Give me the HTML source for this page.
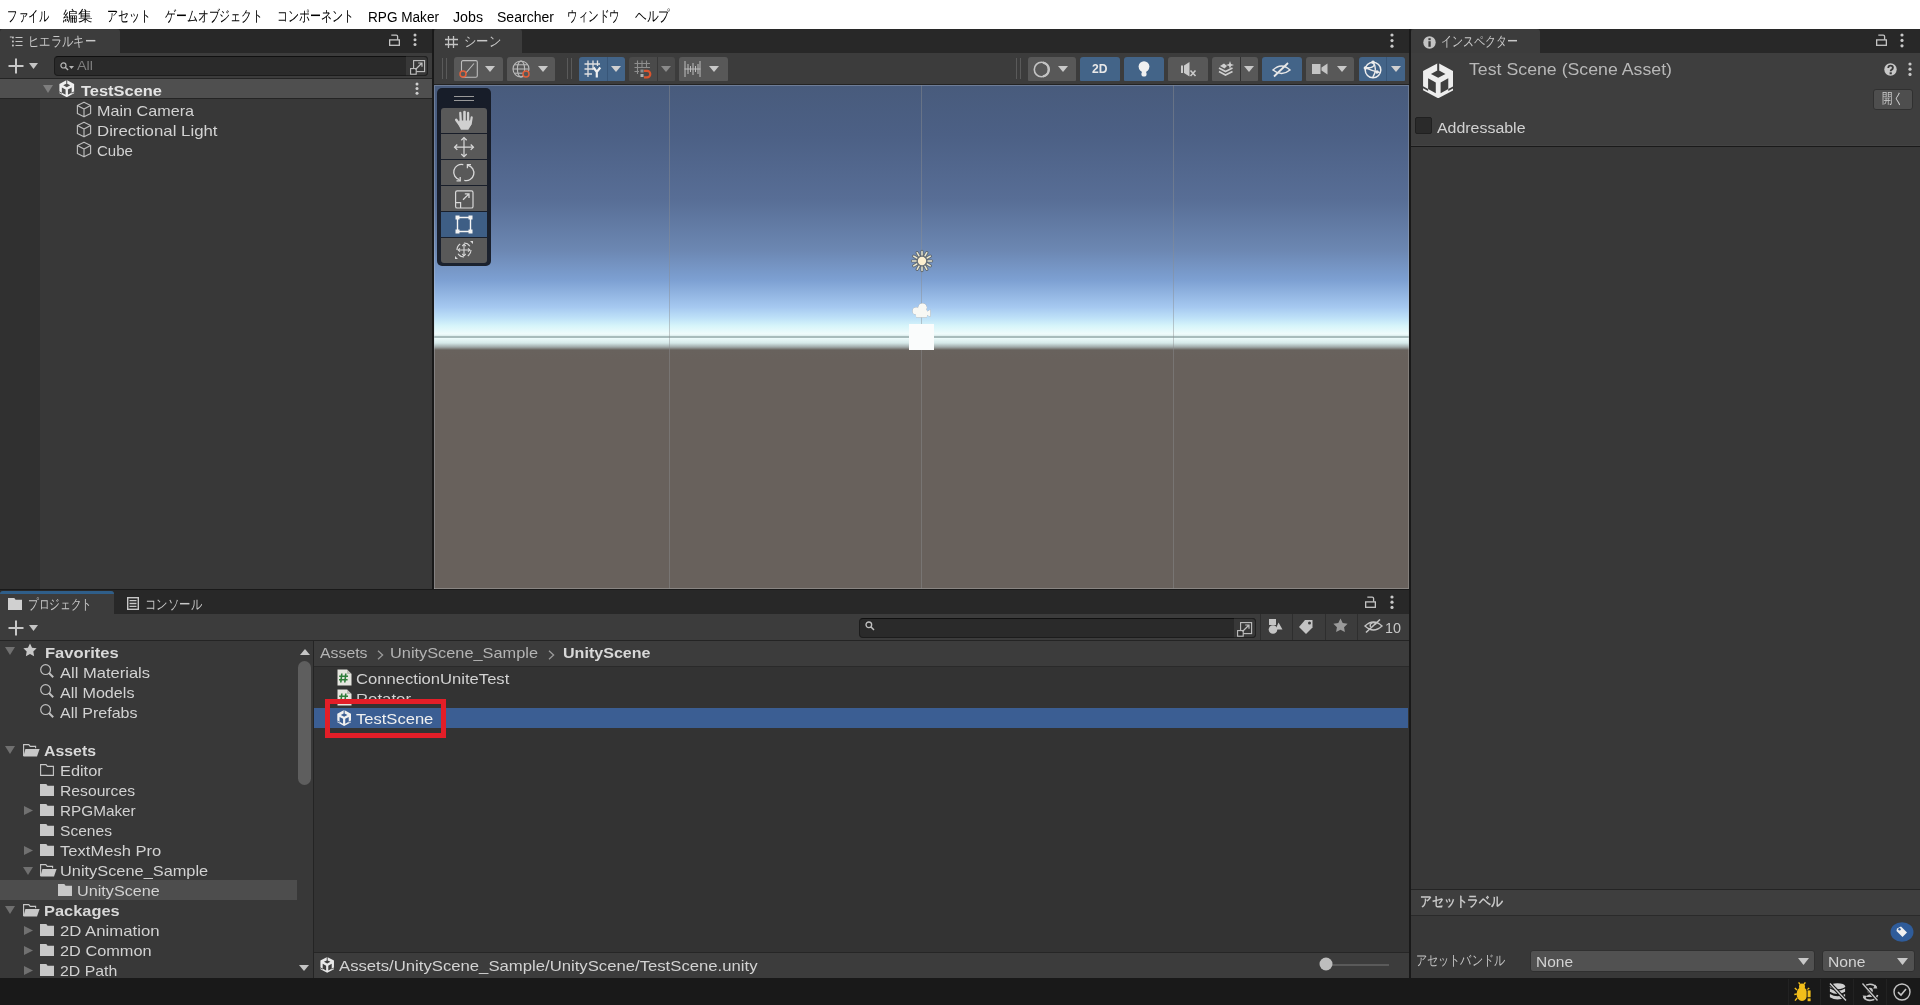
<!DOCTYPE html>
<html><head><meta charset="utf-8"><style>
*{box-sizing:border-box;margin:0;padding:0}
html,body{width:1920px;height:1005px;overflow:hidden;background:#191919;font-family:"Liberation Sans",sans-serif;font-size:15px;color:#D2D2D2;position:relative}
.a{position:absolute}
svg.a{overflow:visible}
.t{position:absolute;white-space:pre;line-height:1;transform-origin:0 0}

</style></head><body>
<div class="a" style="left:0px;top:0px;width:1920px;height:29px;background:#FFFFFF;"></div>
<span id="t0" class="t" style="left:7px;top:8px;font-size:15px;font-weight:400;color:#000000;transform:scaleX(0.7000);">ファイル</span>
<span id="t1" class="t" style="left:63px;top:8px;font-size:15px;font-weight:400;color:#000000;transform:scaleX(0.9667);">編集</span>
<span id="t2" class="t" style="left:107px;top:8px;font-size:15px;font-weight:400;color:#000000;transform:scaleX(0.7333);">アセット</span>
<span id="t3" class="t" style="left:165px;top:8px;font-size:15px;font-weight:400;color:#000000;transform:scaleX(0.7259);">ゲームオブジェクト</span>
<span id="t4" class="t" style="left:277px;top:8px;font-size:15px;font-weight:400;color:#000000;transform:scaleX(0.7333);">コンポーネント</span>
<span id="t5" class="t" style="left:368px;top:10px;font-size:14px;font-weight:400;color:#000000;transform:scaleX(0.9709);">RPG Maker</span>
<span id="t6" class="t" style="left:453px;top:10px;font-size:14px;font-weight:400;color:#000000;transform:scaleX(1.0143);">Jobs</span>
<span id="t7" class="t" style="left:497px;top:10px;font-size:14px;font-weight:400;color:#000000;transform:scaleX(1.0033);">Searcher</span>
<span id="t8" class="t" style="left:567px;top:8px;font-size:15px;font-weight:400;color:#000000;transform:scaleX(0.7067);">ウィンドウ</span>
<span id="t9" class="t" style="left:635px;top:8px;font-size:15px;font-weight:400;color:#000000;transform:scaleX(0.7778);">ヘルプ</span>
<div class="a" style="left:0px;top:29px;width:1920px;height:949px;background:#191919;"></div>
<div class="a" style="left:0px;top:29px;width:432px;height:24px;background:#282828;"></div>
<div class="a" style="left:0px;top:29px;width:120px;height:24px;background:#3C3C3C;border-radius:3px 3px 0 0"></div>
<div class="a" style="left:0px;top:53px;width:432px;height:25px;background:#3C3C3C;"></div>
<div class="a" style="left:0px;top:78px;width:432px;height:1px;background:#242424;"></div>
<div class="a" style="left:0px;top:79px;width:432px;height:510px;background:#383838;"></div>
<div class="a" style="left:0px;top:99px;width:40px;height:490px;background:#303030;"></div>
<div class="a" style="left:0px;top:79px;width:432px;height:20px;background:#4F4F4F;"></div>
<div class="a" style="left:0px;top:98px;width:432px;height:1px;background:#242424;"></div>
<div class="a" style="left:434px;top:29px;width:975px;height:24px;background:#282828;"></div>
<div class="a" style="left:434px;top:29px;width:88px;height:24px;background:#3C3C3C;border-radius:3px 3px 0 0"></div>
<div class="a" style="left:434px;top:53px;width:975px;height:32px;background:#3C3C3C;"></div>
<div class="a" style="left:434px;top:84px;width:975px;height:1px;background:#232323;"></div>
<div class="a" style="left:434px;top:85px;width:975px;height:504px;background:linear-gradient(to bottom,#485B7C 0px,#4C6085 50px,#586E96 115px,#6C87B2 165px,#7DA0D2 195px,#A5C8F0 222px,#BEE1F8 233px,#D7F5FA 241px,#F0FCFC 249px,#E0F0F0 250.5px,#A8BCBC 251px,#A8BCBC 252.60000000000002px,#EBFAFA 253.5px,#D5E9E9 258px,#A0AAAA 262px,#68625D 265px,#68615C 275px,#68615C 504px);"></div>
<div class="a" style="left:434px;top:85px;width:975px;height:1px;background:rgba(200,205,215,0.30);"></div>
<div class="a" style="left:434px;top:86px;width:1px;height:503px;background:rgba(200,205,215,0.30);"></div>
<div class="a" style="left:434px;top:588px;width:975px;height:1px;background:rgba(200,200,200,0.35);"></div>
<div class="a" style="left:1408px;top:86px;width:1px;height:502px;background:rgba(200,200,200,0.28);"></div>
<div class="a" style="left:1411px;top:29px;width:509px;height:24px;background:#282828;"></div>
<div class="a" style="left:1411px;top:29px;width:129px;height:24px;background:#3C3C3C;border-radius:3px 3px 0 0"></div>
<div class="a" style="left:1411px;top:53px;width:509px;height:925px;background:#383838;"></div>
<div class="a" style="left:1411px;top:53px;width:509px;height:92px;background:#3E3E3E;"></div>
<div class="a" style="left:0px;top:590px;width:1409px;height:24px;background:#282828;"></div>
<div class="a" style="left:0px;top:591px;width:114px;height:23px;background:#3C3C3C;border-radius:3px 3px 0 0"></div>
<div class="a" style="left:0px;top:591px;width:114px;height:3px;background:#2F5E89;border-radius:3px 3px 0 0"></div>
<div class="a" style="left:0px;top:614px;width:1409px;height:26px;background:#3C3C3C;"></div>
<div class="a" style="left:0px;top:640px;width:1409px;height:1px;background:#242424;"></div>
<div class="a" style="left:0px;top:641px;width:1409px;height:337px;background:#383838;"></div>
<svg class="a" style="left:9px;top:36px;" width="14" height="11" viewBox="0 0 14 11"><path d="M0.5 1 L2.5 0 V2 Z" fill="#C4C4C4"/><rect x="3" y="0.6" width="1.8" height="1.8" fill="#C4C4C4"/><rect x="3" y="4.6" width="1.8" height="1.8" fill="#C4C4C4"/><rect x="3" y="8.6" width="1.8" height="1.8" fill="#C4C4C4"/><path d="M6.5 1.5 H13.5 M6.5 5.5 H13.5 M6.5 9.5 H13.5" stroke="#C4C4C4" stroke-width="1.1"/></svg>
<span id="t10" class="t" style="left:28px;top:34px;font-size:14px;font-weight:400;color:#C8C8C8;transform:scaleX(0.8095);">ヒエラルキー</span>
<svg class="a" style="left:389px;top:34px;" width="11" height="12" viewBox="0 0 11 12"><path d="M2.3 1.2 H7.2 Q8.6 1.2 8.6 2.6 V5.8" fill="none" stroke="#C4C4C4" stroke-width="1.3"/><rect x="0.65" y="5.9" width="9.7" height="5.4" fill="none" stroke="#C4C4C4" stroke-width="1.3"/></svg>
<svg class="a" style="left:412px;top:32.2px;" width="6" height="16" viewBox="0 0 6 16"><circle cx="3" cy="3.00" r="1.5" fill="#C4C4C4"/><circle cx="3" cy="7.80" r="1.5" fill="#C4C4C4"/><circle cx="3" cy="12.60" r="1.5" fill="#C4C4C4"/></svg>
<svg class="a" style="left:8px;top:58px;" width="16" height="16" viewBox="0 0 16 16"><path d="M8 0.5 V15.5 M0.5 8 H15.5" stroke="#C8C8C8" stroke-width="2"/></svg>
<svg class="a" style="left:29px;top:63px;" width="9" height="6" viewBox="0 0 9 6"><path d="M0 0 H9 L4.5 6 Z" fill="#C4C4C4"/></svg>
<div class="a" style="left:54px;top:56px;width:374px;height:20px;background:#2A2A2A;border:1px solid #1C1C1C;border-top-color:#101010;border-radius:4px"></div>
<div class="a" style="left:406px;top:56px;width:22px;height:20px;background:#383838;border:1px solid #212121;border-left:none;border-radius:0 4px 4px 0"></div>
<svg class="a" style="left:60px;top:62px;" width="9" height="9" viewBox="0 0 12 12"><circle cx="4.6" cy="4.6" r="3.4" fill="none" stroke="#B4B4B4" stroke-width="1.6"/><path d="M7 7 L10.8 10.8" stroke="#B4B4B4" stroke-width="1.8"/></svg>
<svg class="a" style="left:69px;top:66px;" width="5" height="3" viewBox="0 0 5 3"><path d="M0 0 H5 L2.5 3 Z" fill="#B4B4B4"/></svg>
<span id="t11" class="t" style="left:77px;top:59px;font-size:13px;font-weight:400;color:#7F7F7F;transform:scaleX(1.1070);">All</span>
<svg class="a" style="left:410px;top:59px;" width="16" height="16" viewBox="0 0 16 16"><rect x="3.6" y="1.6" width="11" height="11" fill="none" stroke="#C0C0C0" stroke-width="1.1"/><rect x="0.6" y="9.6" width="5.6" height="5.6" fill="#2c2c2c" stroke="#C0C0C0" stroke-width="1.1"/><path d="M5.5 10.5 L12 4 M8.2 4 H12 V7.8" fill="none" stroke="#C0C0C0" stroke-width="1.2"/></svg>
<svg class="a" style="left:43px;top:85px;" width="10" height="8" viewBox="0 0 10 8"><path d="M0 0 H10 L5.0 8 Z" fill="#7E7E7E"/></svg>
<svg class="a" style="left:59px;top:80px;overflow:hidden" width="15.5" height="17.2" viewBox="0 0 30 35"><path d="M15 0 L30 8 V27 L15 35 L0 27 V8 Z" fill="#F0F0F0"/><path d="M14 -0.5 H16 V7.6 H14 Z M15 7 L22.2 10.8 L15 14.6 L7.8 10.8 Z M5 15.2 L12.6 19.4 V30 L5 25.8 Z M25 15.2 L17.4 19.4 V30 L25 25.8 Z M-0.5 22.8 L5 25.8 V27.8 L-0.5 24.8 Z M30.5 22.8 L25 25.8 V27.8 L30.5 24.8 Z" fill="#4F4F4F"/></svg>
<span id="t12" class="t" style="left:81px;top:83px;font-size:15px;font-weight:700;color:#E4E4E4;transform:scaleX(1.0955);">TestScene</span>
<svg class="a" style="left:414px;top:81.2px;" width="6" height="16" viewBox="0 0 6 16"><circle cx="3" cy="3.00" r="1.5" fill="#D0D0D0"/><circle cx="3" cy="7.60" r="1.5" fill="#D0D0D0"/><circle cx="3" cy="12.20" r="1.5" fill="#D0D0D0"/></svg>
<svg class="a" style="left:76px;top:101px;" width="16" height="17" viewBox="0 0 16 17"><path d="M8 1.2 L14.6 4.6 V12.4 L8 15.8 L1.4 12.4 V4.6 Z M1.4 4.6 L8 8 L14.6 4.6 M8 8 V15.8" fill="none" stroke="#BDBDBD" stroke-width="1.15" stroke-linejoin="round"/></svg>
<span id="t13" class="t" style="left:97px;top:103px;font-size:15px;font-weight:400;color:#D2D2D2;transform:scaleX(1.0774);">Main Camera</span>
<svg class="a" style="left:76px;top:121px;" width="16" height="17" viewBox="0 0 16 17"><path d="M8 1.2 L14.6 4.6 V12.4 L8 15.8 L1.4 12.4 V4.6 Z M1.4 4.6 L8 8 L14.6 4.6 M8 8 V15.8" fill="none" stroke="#BDBDBD" stroke-width="1.15" stroke-linejoin="round"/></svg>
<span id="t14" class="t" style="left:97px;top:123px;font-size:15px;font-weight:400;color:#D2D2D2;transform:scaleX(1.1203);">Directional Light</span>
<svg class="a" style="left:76px;top:141px;" width="16" height="17" viewBox="0 0 16 17"><path d="M8 1.2 L14.6 4.6 V12.4 L8 15.8 L1.4 12.4 V4.6 Z M1.4 4.6 L8 8 L14.6 4.6 M8 8 V15.8" fill="none" stroke="#BDBDBD" stroke-width="1.15" stroke-linejoin="round"/></svg>
<span id="t15" class="t" style="left:97px;top:143px;font-size:15px;font-weight:400;color:#D2D2D2;transform:scaleX(1.0039);">Cube</span>
<svg class="a" style="left:445px;top:36px;" width="13" height="12" viewBox="0 0 13 12"><path d="M3.5 0 V12 M8.5 0 V12 M0 3.5 H13 M0 8.5 H13" stroke="#C4C4C4" stroke-width="1.3"/></svg>
<span id="t16" class="t" style="left:464px;top:34px;font-size:14px;font-weight:400;color:#C8C8C8;transform:scaleX(0.8810);">シーン</span>
<svg class="a" style="left:1389px;top:31.5px;" width="6" height="16" viewBox="0 0 6 16"><circle cx="3" cy="3.00" r="1.6" fill="#C8C8C8"/><circle cx="3" cy="8.60" r="1.6" fill="#C8C8C8"/><circle cx="3" cy="14.20" r="1.6" fill="#C8C8C8"/></svg>
<div class="a" style="left:442px;top:58px;width:1px;height:21px;background:#5A5A5A;"></div>
<div class="a" style="left:446px;top:58px;width:1px;height:21px;background:#5A5A5A;"></div>
<div class="a" style="left:454px;top:57px;width:49px;height:24px;background:#585858;border-radius:3px 3px 1px 1px"></div>
<svg class="a" style="left:459px;top:60px;" width="19" height="18" viewBox="0 0 19 18"><rect x="2.5" y="0.6" width="15.8" height="16.6" rx="1.5" fill="none" stroke="#BDBDBD" stroke-width="1.1"/><path d="M6 14 L15 3.5" stroke="#BDBDBD" stroke-width="1.1"/><circle cx="4" cy="14" r="3" fill="#585858" stroke="#E2603A" stroke-width="1.5"/></svg>
<svg class="a" style="left:485px;top:66px;" width="10" height="6" viewBox="0 0 10 6"><path d="M0 0 H10 L5.0 6 Z" fill="#C8C8C8"/></svg>
<div class="a" style="left:507px;top:57px;width:48px;height:24px;background:#585858;border-radius:3px 3px 1px 1px"></div>
<svg class="a" style="left:512px;top:60px;" width="19" height="18" viewBox="0 0 19 18"><circle cx="9" cy="9" r="8" fill="none" stroke="#BDBDBD" stroke-width="1.1"/><ellipse cx="9" cy="9" rx="3.6" ry="8" fill="none" stroke="#BDBDBD" stroke-width="1.1"/><path d="M1 9 H17 M2.5 4.8 H15.5 M2.5 13.2 H15.5" stroke="#BDBDBD" stroke-width="1"/><circle cx="14" cy="14" r="3" fill="#585858" stroke="#E2603A" stroke-width="1.5"/></svg>
<svg class="a" style="left:538px;top:66px;" width="10" height="6" viewBox="0 0 10 6"><path d="M0 0 H10 L5.0 6 Z" fill="#C8C8C8"/></svg>
<div class="a" style="left:567px;top:58px;width:1px;height:21px;background:#5A5A5A;"></div>
<div class="a" style="left:571px;top:58px;width:1px;height:21px;background:#5A5A5A;"></div>
<div class="a" style="left:579px;top:57px;width:46px;height:24px;background:#436488;border-radius:3px 3px 1px 1px"></div>
<div class="a" style="left:607px;top:57px;width:1px;height:24px;background:#385678;"></div>
<svg class="a" style="left:584px;top:60px;" width="18" height="18" viewBox="0 0 18 18"><path d="M4 0.5 V17 M9 0.5 V10 M13.5 0.5 V6 M0.5 4 H16 M0.5 9 H9 M0.5 14 H8" stroke="#E0E0E0" stroke-width="1.3"/><path d="M9.5 7.5 L12.8 12 L16.3 7.5 M12.8 12 V17.5" fill="none" stroke="#F0F0F0" stroke-width="2.2"/></svg>
<svg class="a" style="left:611px;top:66px;" width="10" height="6" viewBox="0 0 10 6"><path d="M0 0 H10 L5.0 6 Z" fill="#D0D0D0"/></svg>
<div class="a" style="left:629px;top:57px;width:46px;height:24px;background:#4A4A4A;border-radius:3px 3px 1px 1px"></div>
<div class="a" style="left:657px;top:57px;width:1px;height:24px;background:#383838;"></div>
<svg class="a" style="left:634px;top:60px;" width="18" height="18" viewBox="0 0 18 18"><path d="M3.5 0.5 V14 M8 0.5 V8 M12.5 0.5 V8 M0.5 3.5 H16 M0.5 7.5 H16 M0.5 11.5 H5" stroke="#8E8E8E" stroke-width="1.1"/><rect x="6.5" y="9.5" width="3" height="3" fill="#8E8E8E"/><rect x="6.5" y="14" width="3" height="3" fill="#B0B0B0"/><path d="M10 10.8 H13 A3.3 3.3 0 0 1 13 17.4 H10" fill="none" stroke="#D9542E" stroke-width="2.2"/></svg>
<svg class="a" style="left:661px;top:66px;" width="10" height="6" viewBox="0 0 10 6"><path d="M0 0 H10 L5.0 6 Z" fill="#8A8A8A"/></svg>
<div class="a" style="left:679px;top:57px;width:49px;height:24px;background:#585858;border-radius:3px 3px 1px 1px"></div>
<svg class="a" style="left:684px;top:60px;" width="17" height="18" viewBox="0 0 17 18"><path d="M1 1 V17 M16 1 V17 M0.5 9 H16.5 M4 4 V14 M6.5 6 V12 M9 3 V15 M11.5 6 V12 M14 4 V14" stroke="#BDBDBD" stroke-width="1"/></svg>
<svg class="a" style="left:709px;top:66px;" width="10" height="6" viewBox="0 0 10 6"><path d="M0 0 H10 L5.0 6 Z" fill="#C8C8C8"/></svg>
<div class="a" style="left:1016px;top:58px;width:1px;height:21px;background:#5A5A5A;"></div>
<div class="a" style="left:1020px;top:58px;width:1px;height:21px;background:#5A5A5A;"></div>
<div class="a" style="left:1028px;top:57px;width:48px;height:24px;background:#585858;border-radius:3px 3px 1px 1px"></div>
<svg class="a" style="left:1033px;top:61px;" width="18" height="17" viewBox="0 0 18 17"><circle cx="8.5" cy="8.5" r="7.2" fill="none" stroke="#C4C4C4" stroke-width="1.6"/><path d="M10 1.6 A7 7 0 0 1 10 15.4" fill="none" stroke="#C4C4C4" stroke-width="2.4"/></svg>
<svg class="a" style="left:1058px;top:66px;" width="10" height="6" viewBox="0 0 10 6"><path d="M0 0 H10 L5.0 6 Z" fill="#C8C8C8"/></svg>
<div class="a" style="left:1080px;top:57px;width:40px;height:24px;background:#436488;border-radius:3px 3px 1px 1px"></div>
<span id="t17" class="t" style="left:1092px;top:63px;font-size:12.5px;font-weight:700;color:#E8E8E8;transform:scaleX(0.9697);">2D</span>
<div class="a" style="left:1124px;top:57px;width:40px;height:24px;background:#436488;border-radius:3px 3px 1px 1px"></div>
<svg class="a" style="left:1138px;top:61px;" width="12" height="16" viewBox="0 0 12 16"><circle cx="6" cy="5.6" r="5.4" fill="#F0F0F0"/><path d="M3.4 9 H8.6 L8 12 H4 Z" fill="#F0F0F0"/><circle cx="6" cy="13" r="2.6" fill="#F0F0F0"/></svg>
<div class="a" style="left:1168px;top:57px;width:40px;height:24px;background:#585858;border-radius:3px 3px 1px 1px"></div>
<svg class="a" style="left:1181px;top:62px;" width="16" height="15" viewBox="0 0 16 15"><rect x="0" y="3.5" width="2" height="7.5" fill="#CACACA"/><path d="M3 3.5 L8.5 0 V14.5 L3 11 Z" fill="#CACACA"/><path d="M9.5 8.5 L14.5 14 M14.5 8.5 L9.5 14" stroke="#CACACA" stroke-width="1.6"/></svg>
<div class="a" style="left:1212px;top:57px;width:46px;height:24px;background:#585858;border-radius:3px 3px 1px 1px"></div>
<div class="a" style="left:1240px;top:57px;width:1px;height:24px;background:#333333;"></div>
<svg class="a" style="left:1218px;top:61px;" width="16" height="16" viewBox="0 0 16 16"><path d="M1 7 L7.5 10.5 L14.5 7 M1 10.5 L7.5 14 L14.5 10.5" fill="none" stroke="#CFCFCF" stroke-width="1.6"/><path d="M2 5 L6 2.5 L9 5 L6.5 7.5 Z" fill="#CFCFCF"/><path d="M12 0 L13 3 L16 4 L13 5 L12 8 L11 5 L8 4 L11 3 Z" fill="#CFCFCF"/></svg>
<svg class="a" style="left:1244px;top:66px;" width="10" height="6" viewBox="0 0 10 6"><path d="M0 0 H10 L5.0 6 Z" fill="#C8C8C8"/></svg>
<div class="a" style="left:1262px;top:57px;width:40px;height:24px;background:#436488;border-radius:3px 3px 1px 1px"></div>
<svg class="a" style="left:1272px;top:62px;" width="19" height="15" viewBox="0 0 19 15"><path d="M1 8 Q9.5 0 18 8 Q9.5 15 1 8 Z" fill="none" stroke="#E8E8E8" stroke-width="1.5"/><path d="M2 14.5 L16 1" stroke="#E8E8E8" stroke-width="1.8"/></svg>
<div class="a" style="left:1306px;top:57px;width:48px;height:24px;background:#585858;border-radius:3px 3px 1px 1px"></div>
<svg class="a" style="left:1312px;top:63px;" width="17" height="13" viewBox="0 0 17 13"><rect x="0" y="1" width="8.5" height="10" fill="#C4C4C4"/><path d="M9.5 4.5 L15.5 0.5 V11.5 L9.5 7.5 Z" fill="#C4C4C4"/></svg>
<svg class="a" style="left:1337px;top:66px;" width="10" height="6" viewBox="0 0 10 6"><path d="M0 0 H10 L5.0 6 Z" fill="#C8C8C8"/></svg>
<div class="a" style="left:1359px;top:57px;width:46px;height:24px;background:#436488;border-radius:3px 3px 1px 1px"></div>
<div class="a" style="left:1386px;top:57px;width:1px;height:24px;background:#385678;"></div>
<svg class="a" style="left:1363px;top:60px;" width="20" height="19" viewBox="0 0 20 19"><circle cx="10" cy="10" r="7.8" fill="none" stroke="#EDEDED" stroke-width="1.5"/><path d="M10 2 Q14 8 2.5 7.8 M10 2 Q15 9 9.5 17.8 M2.5 7.8 Q10 11 16.8 12.6" fill="none" stroke="#EDEDED" stroke-width="1.4"/><circle cx="10" cy="2.3" r="1.8" fill="#EDEDED"/><circle cx="2.4" cy="8" r="1.8" fill="#EDEDED"/><circle cx="14" cy="12" r="1.8" fill="#EDEDED"/></svg>
<svg class="a" style="left:1391px;top:66px;" width="10" height="6" viewBox="0 0 10 6"><path d="M0 0 H10 L5.0 6 Z" fill="#D0D0D0"/></svg>
<div class="a" style="left:669px;top:85px;width:1px;height:504px;background:rgba(140,142,145,0.45);"></div>
<div class="a" style="left:921px;top:85px;width:1px;height:504px;background:rgba(140,142,145,0.45);"></div>
<div class="a" style="left:1173px;top:85px;width:1px;height:504px;background:rgba(140,142,145,0.45);"></div>
<svg class="a" style="left:910.5px;top:250px;" width="22" height="22" viewBox="0 0 22 22"><path d="M17.00 11.00 L20.60 11.00 M16.20 14.00 L19.31 15.80 M14.00 16.20 L15.80 19.31 M11.00 17.00 L11.00 20.60 M8.00 16.20 L6.20 19.31 M5.80 14.00 L2.69 15.80 M5.00 11.00 L1.40 11.00 M5.80 8.00 L2.69 6.20 M8.00 5.80 L6.20 2.69 M11.00 5.00 L11.00 1.40 M14.00 5.80 L15.80 2.69 M16.20 8.00 L19.31 6.20 " stroke="#5F676E" stroke-width="3.2" stroke-linecap="round"/><path d="M17.00 11.00 L20.60 11.00 M16.20 14.00 L19.31 15.80 M14.00 16.20 L15.80 19.31 M11.00 17.00 L11.00 20.60 M8.00 16.20 L6.20 19.31 M5.80 14.00 L2.69 15.80 M5.00 11.00 L1.40 11.00 M5.80 8.00 L2.69 6.20 M8.00 5.80 L6.20 2.69 M11.00 5.00 L11.00 1.40 M14.00 5.80 L15.80 2.69 M16.20 8.00 L19.31 6.20 " stroke="#E9E6CF" stroke-width="1.5" stroke-linecap="round"/><circle cx="11" cy="11" r="5" fill="#5F676E"/><circle cx="11" cy="11" r="4.2" fill="#FDEFCF"/></svg>
<svg class="a" style="left:911px;top:303px;filter:drop-shadow(0 0 0.6px rgba(60,60,60,0.6))" width="22" height="16" viewBox="0 0 22 16"><circle cx="11.5" cy="4.6" r="4.4" fill="#F8F8F4"/><circle cx="5.2" cy="8" r="3.8" fill="#F8F8F4"/><rect x="5" y="6.5" width="11" height="8" rx="1" fill="#F8F8F4"/><path d="M15 9 L19.5 6.5 V14 L15 11.5 Z" fill="#F8F8F4"/></svg>
<div class="a" style="left:909px;top:324px;width:25px;height:26px;background:#FAFCFC;"></div>
<div class="a" style="left:437px;top:88px;width:54px;height:178px;background:rgba(20,24,34,0.92);border-radius:5px"></div>
<div class="a" style="left:454px;top:96px;width:20px;height:1px;background:#9A9A9A;"></div>
<div class="a" style="left:454px;top:100px;width:20px;height:1px;background:#9A9A9A;"></div>
<div class="a" style="left:441px;top:108px;width:46px;height:25px;background:#595959;border-radius:3px 3px 0 0"></div>
<div class="a" style="left:441px;top:134px;width:46px;height:25px;background:#595959;border-radius:0"></div>
<div class="a" style="left:441px;top:160px;width:46px;height:25px;background:#595959;border-radius:0"></div>
<div class="a" style="left:441px;top:186px;width:46px;height:25px;background:#595959;border-radius:0"></div>
<div class="a" style="left:441px;top:212px;width:46px;height:25px;background:#3E5E85;border-radius:0"></div>
<div class="a" style="left:441px;top:238px;width:46px;height:25px;background:#595959;border-radius:0 0 3px 3px"></div>
<svg class="a" style="left:450px;top:106px;" width="28" height="28" viewBox="0 0 28 28"><g fill="none" stroke="#D0D0D0" stroke-linecap="round"><path d="M6.3 13.9 L10.4 19.5" stroke-width="2.6"/><path d="M10.3 6.9 L10.8 16" stroke-width="2.3"/><path d="M14.5 6.1 V15" stroke-width="2.6"/><path d="M18.1 6.9 V15" stroke-width="2.3"/><path d="M21.7 11.4 L20.6 18" stroke-width="2.2"/></g><path d="M9.4 14.5 H21.6 L21 19.2 L18.3 23.8 H10.9 L8.4 18.6 Z" fill="#D0D0D0"/></svg>
<svg class="a" style="left:450px;top:134px;" width="28" height="26" viewBox="0 0 28 26"><path d="M14 3.8 V22.4 M4.8 13.2 H23.2" stroke="#D8D8D8" stroke-width="1.2"/><path d="M11.3 6.3 L14 3.6 L16.7 6.3 M11.3 20 L14 22.7 L16.7 20 M7.3 10.5 L4.6 13.2 L7.3 15.9 M20.7 10.5 L23.4 13.2 L20.7 15.9" fill="none" stroke="#D8D8D8" stroke-width="1.3"/></svg>
<svg class="a" style="left:450px;top:160px;" width="28" height="26" viewBox="0 0 28 26"><path d="M13.3 4.7 A7.6 7.6 0 0 0 9.5 19.6 M14.3 20.4 A7.6 7.6 0 0 0 18 5.4" fill="none" stroke="#D8D8D8" stroke-width="1.3"/><path d="M6.5 20.8 L10.2 20.8 L10.2 17 M21 4.6 L17.4 4.6 L17.4 8.3" fill="none" stroke="#D8D8D8" stroke-width="1.3"/></svg>
<svg class="a" style="left:450px;top:186px;" width="28" height="26" viewBox="0 0 28 26"><rect x="5.6" y="4.8" width="17.4" height="17.2" rx="1.6" fill="none" stroke="#D8D8D8" stroke-width="1.2"/><path d="M5.6 16.6 H10.6 V22" fill="none" stroke="#D8D8D8" stroke-width="1.2"/><path d="M13 13.8 L19 7.9 M14.8 7.9 H19 V12.1" fill="none" stroke="#D8D8D8" stroke-width="1.3"/></svg>
<svg class="a" style="left:455px;top:215px;" width="18" height="19" viewBox="0 0 18 19"><path d="M2.5 3 V16 M15.5 3 V16 M3 2.5 H15 M3 16.5 H15" stroke="#F4F4F4" stroke-width="1.4"/><rect x="0.5" y="0.5" width="4" height="4" fill="#F4F4F4"/><rect x="13.5" y="0.5" width="4" height="4" fill="#F4F4F4"/><rect x="0.5" y="14.5" width="4" height="4" fill="#F4F4F4"/><rect x="13.5" y="14.5" width="4" height="4" fill="#F4F4F4"/></svg>
<svg class="a" style="left:454px;top:240px;" width="20" height="20" viewBox="0 0 20 20"><circle cx="10" cy="10" r="7" fill="none" stroke="#D8D8D8" stroke-width="1.2" stroke-dasharray="7 3.9"/><path d="M10 4.5 V15.5 M4.5 10 H15.5" stroke="#D8D8D8" stroke-width="1.1"/><path d="M8.3 6 L10 4.2 L11.7 6 M8.3 14 L10 15.8 L11.7 14 M6 8.3 L4.2 10 L6 11.7 M14 8.3 L15.8 10 L14 11.7" fill="none" stroke="#D8D8D8" stroke-width="1.1"/><path d="M16 1 H19 V4 Z M1 16 V19 H4 Z" fill="#D8D8D8"/></svg>
<svg class="a" style="left:1423px;top:36px;" width="13" height="13" viewBox="0 0 13 13"><circle cx="6.5" cy="6.5" r="6.2" fill="#C4C4C4"/><rect x="5.4" y="5.2" width="2.3" height="5.6" fill="#3C3C3C"/><rect x="5.4" y="2.2" width="2.3" height="2" fill="#3C3C3C"/></svg>
<span id="t18" class="t" style="left:1441px;top:34px;font-size:14px;font-weight:400;color:#C8C8C8;transform:scaleX(0.7857);">インスペクター</span>
<svg class="a" style="left:1876px;top:34px;" width="11" height="12" viewBox="0 0 11 12"><path d="M2.3 1.2 H7.2 Q8.6 1.2 8.6 2.6 V5.8" fill="none" stroke="#C4C4C4" stroke-width="1.3"/><rect x="0.65" y="5.9" width="9.7" height="5.4" fill="none" stroke="#C4C4C4" stroke-width="1.3"/></svg>
<svg class="a" style="left:1899px;top:31.5px;" width="6" height="16" viewBox="0 0 6 16"><circle cx="3" cy="3.00" r="1.6" fill="#C8C8C8"/><circle cx="3" cy="8.40" r="1.6" fill="#C8C8C8"/><circle cx="3" cy="13.80" r="1.6" fill="#C8C8C8"/></svg>
<svg class="a" style="left:1423px;top:62.7px;overflow:hidden" width="30.4" height="35.3" viewBox="0 0 30 35"><path d="M15 0 L30 8 V27 L15 35 L0 27 V8 Z" fill="#EDEDED"/><path d="M14 -0.5 H16 V7.6 H14 Z M15 7 L22.2 10.8 L15 14.6 L7.8 10.8 Z M5 15.2 L12.6 19.4 V30 L5 25.8 Z M25 15.2 L17.4 19.4 V30 L25 25.8 Z M-0.5 22.8 L5 25.8 V27.8 L-0.5 24.8 Z M30.5 22.8 L25 25.8 V27.8 L30.5 24.8 Z" fill="#3E3E3E"/></svg>
<span id="t19" class="t" style="left:1469px;top:61px;font-size:16.5px;font-weight:400;color:#B8B8B8;transform:scaleX(1.0744);">Test Scene (Scene Asset)</span>
<svg class="a" style="left:1884px;top:63px;" width="13" height="13" viewBox="0 0 13 13"><circle cx="6.5" cy="6.5" r="6.2" fill="#C8C8C8"/><path d="M4.3 5 Q4.3 2.6 6.6 2.6 Q8.9 2.6 8.9 4.7 Q8.9 6 7.4 6.8 Q6.7 7.2 6.7 8.2" fill="none" stroke="#383838" stroke-width="1.9"/><rect x="5.6" y="9.3" width="2.2" height="2" fill="#383838"/></svg>
<svg class="a" style="left:1907px;top:61px;" width="6" height="16" viewBox="0 0 6 16"><circle cx="3" cy="3.00" r="1.6" fill="#C8C8C8"/><circle cx="3" cy="8.20" r="1.6" fill="#C8C8C8"/><circle cx="3" cy="13.40" r="1.6" fill="#C8C8C8"/></svg>
<div class="a" style="left:1873px;top:89px;width:40px;height:21px;background:#4E4E4E;border:1px solid #303030;border-radius:3px"></div>
<span id="t20" class="t" style="left:1881.5px;top:91px;font-size:14px;font-weight:400;color:#D0D0D0;transform:scaleX(0.7500);">開く</span>
<div class="a" style="left:1415px;top:117px;width:17px;height:17px;background:#2A2A2A;border:1px solid #202020;border-radius:2px"></div>
<span id="t21" class="t" style="left:1436.5px;top:120px;font-size:15.5px;font-weight:400;color:#D2D2D2;transform:scaleX(1.0270);">Addressable</span>
<div class="a" style="left:1411px;top:145px;width:509px;height:1px;background:#434343;"></div>
<div class="a" style="left:1411px;top:146px;width:509px;height:1px;background:#1A1A1A;"></div>
<div class="a" style="left:1411px;top:889px;width:509px;height:1px;background:#242424;"></div>
<div class="a" style="left:1411px;top:890px;width:509px;height:25px;background:#3E3E3E;"></div>
<div class="a" style="left:1411px;top:915px;width:509px;height:1px;background:#2A2A2A;"></div>
<span id="t22" class="t" style="left:1420px;top:894px;font-size:14px;font-weight:700;color:#C8C8C8;transform:scaleX(0.8469);">アセットラベル</span>
<svg class="a" style="left:1890px;top:922px;" width="24" height="20" viewBox="0 0 24 20"><ellipse cx="12" cy="10" rx="11.5" ry="9.8" fill="#2F5C9A"/><path d="M7 6.5 L11 4.5 L17 10.5 L12.5 15 L6.5 9 Z" fill="#F0F0F0"/><circle cx="9.5" cy="7.3" r="1.2" fill="#2F5C9A"/></svg>
<span id="t23" class="t" style="left:1416px;top:953px;font-size:14px;font-weight:400;color:#C4C4C4;transform:scaleX(0.7946);">アセットバンドル</span>
<div class="a" style="left:1530px;top:950px;width:285px;height:22px;background:#515151;border:1px solid #303030;border-radius:3px"></div>
<span id="t24" class="t" style="left:1535.5px;top:954px;font-size:15px;font-weight:400;color:#D2D2D2;transform:scaleX(1.0318);">None</span>
<svg class="a" style="left:1798px;top:958px;" width="11" height="7" viewBox="0 0 11 7"><path d="M0 0 H11 L5.5 7 Z" fill="#C8C8C8"/></svg>
<div class="a" style="left:1822px;top:950px;width:93px;height:22px;background:#515151;border:1px solid #303030;border-radius:3px"></div>
<span id="t25" class="t" style="left:1827.5px;top:954px;font-size:15px;font-weight:400;color:#D2D2D2;transform:scaleX(1.0458);">None</span>
<svg class="a" style="left:1897px;top:958px;" width="11" height="7" viewBox="0 0 11 7"><path d="M0 0 H11 L5.5 7 Z" fill="#C8C8C8"/></svg>
<svg class="a" style="left:8px;top:598px;" width="15" height="13" viewBox="0 0 15 13"><path d="M0 0 H6.3 L7.6 1.8 H14 V12 H0 Z" fill="#D0D0D0"/></svg>
<span id="t26" class="t" style="left:28px;top:597px;font-size:14px;font-weight:400;color:#C8C8C8;transform:scaleX(0.7619);">プロジェクト</span>
<svg class="a" style="left:127px;top:597px;" width="12" height="13" viewBox="0 0 12 13"><rect x="0.7" y="0.7" width="10.6" height="11.6" fill="none" stroke="#C8C8C8" stroke-width="1.4"/><path d="M2.5 3.6 H9.5 M2.5 6.5 H9.5 M2.5 9.4 H9.5" stroke="#C8C8C8" stroke-width="1.3"/></svg>
<span id="t27" class="t" style="left:145px;top:597px;font-size:14px;font-weight:400;color:#C8C8C8;transform:scaleX(0.8143);">コンソール</span>
<svg class="a" style="left:1365px;top:596px;" width="11" height="12" viewBox="0 0 11 12"><path d="M2.3 1.2 H7.2 Q8.6 1.2 8.6 2.6 V5.8" fill="none" stroke="#C4C4C4" stroke-width="1.3"/><rect x="0.65" y="5.9" width="9.7" height="5.4" fill="none" stroke="#C4C4C4" stroke-width="1.3"/></svg>
<svg class="a" style="left:1389px;top:593.5px;" width="6" height="16" viewBox="0 0 6 16"><circle cx="3" cy="3.00" r="1.6" fill="#C8C8C8"/><circle cx="3" cy="8.20" r="1.6" fill="#C8C8C8"/><circle cx="3" cy="13.40" r="1.6" fill="#C8C8C8"/></svg>
<svg class="a" style="left:8px;top:620px;" width="16" height="16" viewBox="0 0 16 16"><path d="M8 0.5 V15.5 M0.5 8 H15.5" stroke="#C8C8C8" stroke-width="2"/></svg>
<svg class="a" style="left:29px;top:625px;" width="9" height="6" viewBox="0 0 9 6"><path d="M0 0 H9 L4.5 6 Z" fill="#C4C4C4"/></svg>
<div class="a" style="left:859px;top:618px;width:397px;height:20px;background:#2A2A2A;border:1px solid #1C1C1C;border-top-color:#101010;border-radius:4px"></div>
<div class="a" style="left:1234px;top:618px;width:22px;height:20px;background:#383838;border:1px solid #212121;border-left:none;border-radius:0 4px 4px 0"></div>
<svg class="a" style="left:865px;top:621px;" width="10" height="10" viewBox="0 0 12 12"><circle cx="4.6" cy="4.6" r="3.4" fill="none" stroke="#C0C0C0" stroke-width="1.6"/><path d="M7 7 L10.8 10.8" stroke="#C0C0C0" stroke-width="1.8"/></svg>
<svg class="a" style="left:1237px;top:621px;" width="16" height="16" viewBox="0 0 16 16"><rect x="3.6" y="1.6" width="11" height="11" fill="none" stroke="#C0C0C0" stroke-width="1.1"/><rect x="0.6" y="9.6" width="5.6" height="5.6" fill="#2c2c2c" stroke="#C0C0C0" stroke-width="1.1"/><path d="M5.5 10.5 L12 4 M8.2 4 H12 V7.8" fill="none" stroke="#C0C0C0" stroke-width="1.2"/></svg>
<div class="a" style="left:1260px;top:614px;width:1px;height:26px;background:#2E2E2E;"></div>
<div class="a" style="left:1292px;top:614px;width:1px;height:26px;background:#2E2E2E;"></div>
<div class="a" style="left:1325px;top:614px;width:1px;height:26px;background:#2E2E2E;"></div>
<div class="a" style="left:1357px;top:614px;width:1px;height:26px;background:#2E2E2E;"></div>
<svg class="a" style="left:1268px;top:619px;" width="15" height="15" viewBox="0 0 15 15"><rect x="1" y="0" width="7" height="6" fill="#C4C4C4"/><circle cx="5" cy="10.5" r="4.3" fill="#C4C4C4"/><path d="M10.5 3.5 L14.5 10.5 H7.5 Z" fill="#C4C4C4"/></svg>
<svg class="a" style="left:1299px;top:619px;" width="15" height="15" viewBox="0 0 15 15"><path d="M6 1 H13.5 V8.5 L7 15 L0 8 Z" fill="#C4C4C4" transform="rotate(0)"/><circle cx="10.5" cy="4" r="1.5" fill="#3C3C3C"/></svg>
<svg class="a" style="left:1333px;top:618px;" width="15" height="15" viewBox="0 0 15 15"><polygon points="7.50,0.50 9.70,4.97 14.63,5.68 11.07,9.16 11.91,14.07 7.50,11.75 3.09,14.07 3.93,9.16 0.37,5.68 5.30,4.97" fill="#9A9A9A"/></svg>
<svg class="a" style="left:1364px;top:619px;" width="19" height="14" viewBox="0 0 19 14"><path d="M1 7 Q9.5 -1 18 7 Q9.5 15 1 7 Z" fill="none" stroke="#C4C4C4" stroke-width="1.4"/><path d="M2 13.5 L16 0.5" stroke="#C4C4C4" stroke-width="1.6"/><path d="M6.5 8 A3 3 0 0 1 12 5.5" fill="none" stroke="#C4C4C4" stroke-width="1.3"/></svg>
<span id="t28" class="t" style="left:1385px;top:620px;font-size:15px;font-weight:400;color:#C8C8C8;transform:scaleX(0.9588);">10</span>
<div class="a" style="left:0px;top:641px;width:313px;height:337px;background:#383838;"></div>
<div class="a" style="left:313px;top:641px;width:1px;height:337px;background:#242424;"></div>
<div class="a" style="left:314px;top:641px;width:1095px;height:25px;background:#3C3C3C;"></div>
<div class="a" style="left:314px;top:666px;width:1095px;height:1px;background:#2A2A2A;"></div>
<div class="a" style="left:314px;top:667px;width:1095px;height:286px;background:#333333;"></div>
<div class="a" style="left:314px;top:952px;width:1095px;height:1px;background:#262626;"></div>
<div class="a" style="left:314px;top:953px;width:1095px;height:25px;background:#3C3C3C;"></div>
<div class="a" style="left:297px;top:641px;width:16px;height:337px;background:#383838;"></div>
<svg class="a" style="left:300px;top:649px;" width="10" height="6" viewBox="0 0 10 6"><path d="M0 6 H10 L5 0 Z" fill="#C4C4C4"/></svg>
<div class="a" style="left:298px;top:661px;width:13px;height:124px;background:#5E5E5E;border-radius:7px"></div>
<svg class="a" style="left:299px;top:965px;" width="10" height="6" viewBox="0 0 10 6"><path d="M0 0 H10 L5 6 Z" fill="#C4C4C4"/></svg>
<svg class="a" style="left:5px;top:647px;" width="10" height="8" viewBox="0 0 10 8"><path d="M0 0 H10 L5.0 8 Z" fill="#707070"/></svg>
<svg class="a" style="left:23px;top:643px;" width="14" height="14" viewBox="0 0 14 14"><polygon points="7.00,0.50 9.06,4.67 13.66,5.34 10.33,8.58 11.11,13.16 7.00,11.00 2.89,13.16 3.67,8.58 0.34,5.34 4.94,4.67" fill="#C8C8C8"/></svg>
<span id="t29" class="t" style="left:44.5px;top:645px;font-size:15px;font-weight:700;color:#D8D8D8;transform:scaleX(1.1049);">Favorites</span>
<svg class="a" style="left:40px;top:664px;" width="15" height="15" viewBox="0 0 15 15"><circle cx="5.6" cy="5.6" r="4.9" fill="none" stroke="#C0C0C0" stroke-width="1.2"/><path d="M9 9 L13.2 13.2" stroke="#C0C0C0" stroke-width="2"/></svg>
<span id="t30" class="t" style="left:60px;top:665px;font-size:15px;font-weight:400;color:#D2D2D2;transform:scaleX(1.1018);">All Materials</span>
<svg class="a" style="left:40px;top:684px;" width="15" height="15" viewBox="0 0 15 15"><circle cx="5.6" cy="5.6" r="4.9" fill="none" stroke="#C0C0C0" stroke-width="1.2"/><path d="M9 9 L13.2 13.2" stroke="#C0C0C0" stroke-width="2"/></svg>
<span id="t31" class="t" style="left:60px;top:685px;font-size:15px;font-weight:400;color:#D2D2D2;transform:scaleX(1.0765);">All Models</span>
<svg class="a" style="left:40px;top:704px;" width="15" height="15" viewBox="0 0 15 15"><circle cx="5.6" cy="5.6" r="4.9" fill="none" stroke="#C0C0C0" stroke-width="1.2"/><path d="M9 9 L13.2 13.2" stroke="#C0C0C0" stroke-width="2"/></svg>
<span id="t32" class="t" style="left:60px;top:705px;font-size:15px;font-weight:400;color:#D2D2D2;transform:scaleX(1.0683);">All Prefabs</span>
<svg class="a" style="left:5px;top:746px;" width="10" height="8" viewBox="0 0 10 8"><path d="M0 0 H10 L5.0 8 Z" fill="#707070"/></svg>
<svg class="a" style="left:23px;top:744px;" width="17" height="13" viewBox="0 0 17 13"><path d="M0.6 12 V0.6 H5.8 L7.2 2.4 H12.6 V4.2" fill="none" stroke="#C8C8C8" stroke-width="1.1"/><path d="M2.4 5 H16.6 L14 12.4 H0.4 Z" fill="#C8C8C8"/></svg>
<span id="t33" class="t" style="left:44.3px;top:743px;font-size:15px;font-weight:700;color:#D8D8D8;transform:scaleX(1.0568);">Assets</span>
<svg class="a" style="left:40px;top:764px;" width="15" height="13" viewBox="0 0 15 13"><path d="M0.6 0.6 H6 L7.4 2.4 H13.4 V11.4 H0.6 Z" fill="none" stroke="#C8C8C8" stroke-width="1.1"/></svg>
<span id="t34" class="t" style="left:60px;top:763px;font-size:15px;font-weight:400;color:#D2D2D2;transform:scaleX(1.0896);">Editor</span>
<svg class="a" style="left:40px;top:784px;" width="15" height="13" viewBox="0 0 15 13"><path d="M0 0 H6.3 L7.6 1.8 H14 V12 H0 Z" fill="#C8C8C8"/></svg>
<span id="t35" class="t" style="left:60px;top:783px;font-size:15px;font-weight:400;color:#D2D2D2;transform:scaleX(1.0460);">Resources</span>
<svg class="a" style="left:40px;top:804px;" width="15" height="13" viewBox="0 0 15 13"><path d="M0 0 H6.3 L7.6 1.8 H14 V12 H0 Z" fill="#C8C8C8"/></svg>
<svg class="a" style="left:24px;top:806px;" width="9" height="9" viewBox="0 0 9 9"><path d="M0 0 L9 4.5 L0 9 Z" fill="#707070"/></svg>
<span id="t36" class="t" style="left:60px;top:803px;font-size:15px;font-weight:400;color:#D2D2D2;transform:scaleX(1.0204);">RPGMaker</span>
<svg class="a" style="left:40px;top:824px;" width="15" height="13" viewBox="0 0 15 13"><path d="M0 0 H6.3 L7.6 1.8 H14 V12 H0 Z" fill="#C8C8C8"/></svg>
<span id="t37" class="t" style="left:60px;top:823px;font-size:15px;font-weight:400;color:#D2D2D2;transform:scaleX(1.0390);">Scenes</span>
<svg class="a" style="left:40px;top:844px;" width="15" height="13" viewBox="0 0 15 13"><path d="M0 0 H6.3 L7.6 1.8 H14 V12 H0 Z" fill="#C8C8C8"/></svg>
<svg class="a" style="left:24px;top:846px;" width="9" height="9" viewBox="0 0 9 9"><path d="M0 0 L9 4.5 L0 9 Z" fill="#707070"/></svg>
<span id="t38" class="t" style="left:60px;top:843px;font-size:15px;font-weight:400;color:#D2D2D2;transform:scaleX(1.1047);">TextMesh Pro</span>
<svg class="a" style="left:39.5px;top:864px;" width="17" height="13" viewBox="0 0 17 13"><path d="M0.6 12 V0.6 H5.8 L7.2 2.4 H12.6 V4.2" fill="none" stroke="#C8C8C8" stroke-width="1.1"/><path d="M2.4 5 H16.6 L14 12.4 H0.4 Z" fill="#C8C8C8"/></svg>
<svg class="a" style="left:23px;top:867px;" width="10" height="8" viewBox="0 0 10 8"><path d="M0 0 H10 L5.0 8 Z" fill="#707070"/></svg>
<span id="t39" class="t" style="left:60px;top:863px;font-size:15px;font-weight:400;color:#D2D2D2;transform:scaleX(1.0903);">UnityScene_Sample</span>
<div class="a" style="left:0px;top:880px;width:297px;height:20px;background:#4D4D4D;"></div>
<svg class="a" style="left:58px;top:884px;" width="15" height="13" viewBox="0 0 15 13"><path d="M0 0 H6.3 L7.6 1.8 H14 V12 H0 Z" fill="#C8C8C8"/></svg>
<span id="t40" class="t" style="left:77.2px;top:883px;font-size:15px;font-weight:400;color:#D2D2D2;transform:scaleX(1.0793);">UnityScene</span>
<svg class="a" style="left:5px;top:906px;" width="10" height="8" viewBox="0 0 10 8"><path d="M0 0 H10 L5.0 8 Z" fill="#707070"/></svg>
<svg class="a" style="left:23px;top:904px;" width="17" height="13" viewBox="0 0 17 13"><path d="M0.6 12 V0.6 H5.8 L7.2 2.4 H12.6 V4.2" fill="none" stroke="#C8C8C8" stroke-width="1.1"/><path d="M2.4 5 H16.6 L14 12.4 H0.4 Z" fill="#C8C8C8"/></svg>
<span id="t41" class="t" style="left:44.3px;top:903px;font-size:15px;font-weight:700;color:#D8D8D8;transform:scaleX(1.0934);">Packages</span>
<svg class="a" style="left:24px;top:926px;" width="9" height="9" viewBox="0 0 9 9"><path d="M0 0 L9 4.5 L0 9 Z" fill="#707070"/></svg>
<svg class="a" style="left:40px;top:924px;" width="15" height="13" viewBox="0 0 15 13"><path d="M0 0 H6.3 L7.6 1.8 H14 V12 H0 Z" fill="#C8C8C8"/></svg>
<span id="t42" class="t" style="left:60px;top:923px;font-size:15px;font-weight:400;color:#D2D2D2;transform:scaleX(1.1152);">2D Animation</span>
<svg class="a" style="left:24px;top:946px;" width="9" height="9" viewBox="0 0 9 9"><path d="M0 0 L9 4.5 L0 9 Z" fill="#707070"/></svg>
<svg class="a" style="left:40px;top:944px;" width="15" height="13" viewBox="0 0 15 13"><path d="M0 0 H6.3 L7.6 1.8 H14 V12 H0 Z" fill="#C8C8C8"/></svg>
<span id="t43" class="t" style="left:60px;top:943px;font-size:15px;font-weight:400;color:#D2D2D2;transform:scaleX(1.0878);">2D Common</span>
<svg class="a" style="left:24px;top:966px;" width="9" height="9" viewBox="0 0 9 9"><path d="M0 0 L9 4.5 L0 9 Z" fill="#707070"/></svg>
<svg class="a" style="left:40px;top:964px;" width="15" height="13" viewBox="0 0 15 13"><path d="M0 0 H6.3 L7.6 1.8 H14 V12 H0 Z" fill="#C8C8C8"/></svg>
<span id="t44" class="t" style="left:60px;top:963px;font-size:15px;font-weight:400;color:#D2D2D2;transform:scaleX(1.0571);">2D Path</span>
<span id="t45" class="t" style="left:319.5px;top:645px;font-size:15px;font-weight:400;color:#B4B4B4;transform:scaleX(1.0552);">Assets</span>
<svg class="a" style="left:377px;top:650px;" width="7" height="10" viewBox="0 0 7 10"><path d="M1 0.8 L5.6 5 L1 9.2" fill="none" stroke="#9A9A9A" stroke-width="1.3"/></svg>
<span id="t46" class="t" style="left:390px;top:645px;font-size:15px;font-weight:400;color:#B4B4B4;transform:scaleX(1.0889);">UnityScene_Sample</span>
<svg class="a" style="left:548px;top:650px;" width="7" height="10" viewBox="0 0 7 10"><path d="M1 0.8 L5.6 5 L1 9.2" fill="none" stroke="#9A9A9A" stroke-width="1.3"/></svg>
<span id="t47" class="t" style="left:562.5px;top:645px;font-size:15px;font-weight:700;color:#D8D8D8;transform:scaleX(1.0710);">UnityScene</span>
<svg class="a" style="left:337px;top:669px;" width="15" height="17" viewBox="0 0 15 17"><path d="M0.5 0.5 H10 L14.5 5 V16.5 H0.5 Z" fill="#E6E6E0"/><path d="M10 0.5 V5 H14.5" fill="#BDBDB5"/><path d="M4.8 4.5 L3.8 13.5 M8.8 4.5 L7.8 13.5 M2.2 7.3 H11 M2 10.7 H10.6" stroke="#2F7D3A" stroke-width="1.6"/></svg>
<span id="t48" class="t" style="left:356.2px;top:671px;font-size:15px;font-weight:400;color:#D2D2D2;transform:scaleX(1.1075);">ConnectionUniteTest</span>
<svg class="a" style="left:337px;top:689px;" width="15" height="17" viewBox="0 0 15 17"><path d="M0.5 0.5 H10 L14.5 5 V16.5 H0.5 Z" fill="#E6E6E0"/><path d="M10 0.5 V5 H14.5" fill="#BDBDB5"/><path d="M4.8 4.5 L3.8 13.5 M8.8 4.5 L7.8 13.5 M2.2 7.3 H11 M2 10.7 H10.6" stroke="#2F7D3A" stroke-width="1.6"/></svg>
<span id="t49" class="t" style="left:356.2px;top:691px;font-size:15px;font-weight:400;color:#D2D2D2;transform:scaleX(1.1178);">Rotator</span>
<div class="a" style="left:314px;top:708px;width:1094px;height:20px;background:#3B5E93;"></div>
<svg class="a" style="left:336.7px;top:709.8px;overflow:hidden" width="14.3" height="16" viewBox="0 0 30 35"><path d="M15 0 L30 8 V27 L15 35 L0 27 V8 Z" fill="#F0F0F0"/><path d="M14 -0.5 H16 V7.6 H14 Z M15 7 L22.2 10.8 L15 14.6 L7.8 10.8 Z M5 15.2 L12.6 19.4 V30 L5 25.8 Z M25 15.2 L17.4 19.4 V30 L25 25.8 Z M-0.5 22.8 L5 25.8 V27.8 L-0.5 24.8 Z M30.5 22.8 L25 25.8 V27.8 L30.5 24.8 Z" fill="#3B5E93"/></svg>
<span id="t50" class="t" style="left:356.2px;top:711px;font-size:15px;font-weight:400;color:#F0F0F0;transform:scaleX(1.1035);">TestScene</span>
<div class="a" style="left:325px;top:699px;width:121px;height:39px;background:transparent;border:5px solid #E31E28"></div>
<svg class="a" style="left:319.5px;top:957.3px;overflow:hidden" width="14.4" height="15.8" viewBox="0 0 30 35"><path d="M15 0 L30 8 V27 L15 35 L0 27 V8 Z" fill="#E8E8E8"/><path d="M14 -0.5 H16 V7.6 H14 Z M15 7 L22.2 10.8 L15 14.6 L7.8 10.8 Z M5 15.2 L12.6 19.4 V30 L5 25.8 Z M25 15.2 L17.4 19.4 V30 L25 25.8 Z M-0.5 22.8 L5 25.8 V27.8 L-0.5 24.8 Z M30.5 22.8 L25 25.8 V27.8 L30.5 24.8 Z" fill="#3C3C3C"/></svg>
<span id="t51" class="t" style="left:338.5px;top:958px;font-size:15px;font-weight:400;color:#D2D2D2;transform:scaleX(1.1129);">Assets/UnityScene_Sample/UnityScene/TestScene.unity</span>
<div class="a" style="left:1326px;top:964px;width:63px;height:2px;background:#5A5A5A;"></div>
<svg class="a" style="left:1319px;top:957px;" width="14" height="14" viewBox="0 0 14 14"><circle cx="7" cy="7" r="6.5" fill="#BDBDBD"/></svg>
<div class="a" style="left:1788px;top:979px;width:1px;height:26px;background:#222222;"></div>
<div class="a" style="left:1820px;top:979px;width:1px;height:26px;background:#222222;"></div>
<div class="a" style="left:1853px;top:979px;width:1px;height:26px;background:#222222;"></div>
<div class="a" style="left:1886px;top:979px;width:1px;height:26px;background:#222222;"></div>
<svg class="a" style="left:1794px;top:982px;" width="19" height="20" viewBox="0 0 19 20"><g fill="#F2BE1A"><circle cx="8" cy="4.6" r="3"/><ellipse cx="8" cy="12" rx="5.4" ry="7"/></g><path d="M6 2.2 L4.6 0.4 M10 2.2 L11.4 0.4 M3 8 L0.8 6 M2.8 12 L0.3 12.5 M3.2 16 L1 18.6 M13 8 L15.2 6" stroke="#F2BE1A" stroke-width="1.4" fill="none"/><rect x="12.6" y="7.6" width="5" height="12.4" fill="#181818"/><rect x="13.6" y="8.4" width="3" height="6.8" fill="#F2BE1A"/><rect x="13.6" y="16.4" width="3" height="2.8" fill="#F2BE1A"/></svg>
<svg class="a" style="left:1829px;top:983px;" width="18" height="18" viewBox="0 0 18 18"><g fill="#CFCFCF"><ellipse cx="8.5" cy="3.2" rx="7.6" ry="3"/><path d="M0.9 5.6 Q8.5 10 16.1 5.6 V8.8 Q8.5 13.2 0.9 8.8 Z"/><path d="M0.9 11 Q8.5 15.4 16.1 11 V14.2 Q8.5 18.6 0.9 14.2 Z"/></g><path d="M1 0.5 L17 17.5" stroke="#181818" stroke-width="3.6"/><path d="M1 0.5 L17 17.5" stroke="#CFCFCF" stroke-width="1.4"/></svg>
<svg class="a" style="left:1860px;top:982px;" width="20" height="20" viewBox="0 0 20 20"><path d="M4 5 A8 8 0 0 1 16.5 5.5 M17.6 13 A8 8 0 0 1 3.5 15" fill="none" stroke="#C4C4C4" stroke-width="1.6"/><path d="M15.2 2.6 L17.4 6.6 L13.2 6.4 Z M4.8 17.6 L2.6 13.4 L6.8 13.8 Z" fill="#C4C4C4"/><circle cx="10" cy="8.6" r="2.8" fill="#C4C4C4"/><path d="M5.8 15 Q10 9.5 14.2 15 Z" fill="#C4C4C4"/><path d="M2.5 1.5 L17.5 18.5" stroke="#181818" stroke-width="3.4"/><path d="M2.5 1.5 L17.5 18.5" stroke="#C4C4C4" stroke-width="1.4"/></svg>
<svg class="a" style="left:1893px;top:983px;" width="18" height="18" viewBox="0 0 18 18"><circle cx="9" cy="9" r="8" fill="none" stroke="#C4C4C4" stroke-width="1.4"/><path d="M5 9.2 L8 12 L13 6" fill="none" stroke="#C4C4C4" stroke-width="1.6"/></svg>
</body></html>
